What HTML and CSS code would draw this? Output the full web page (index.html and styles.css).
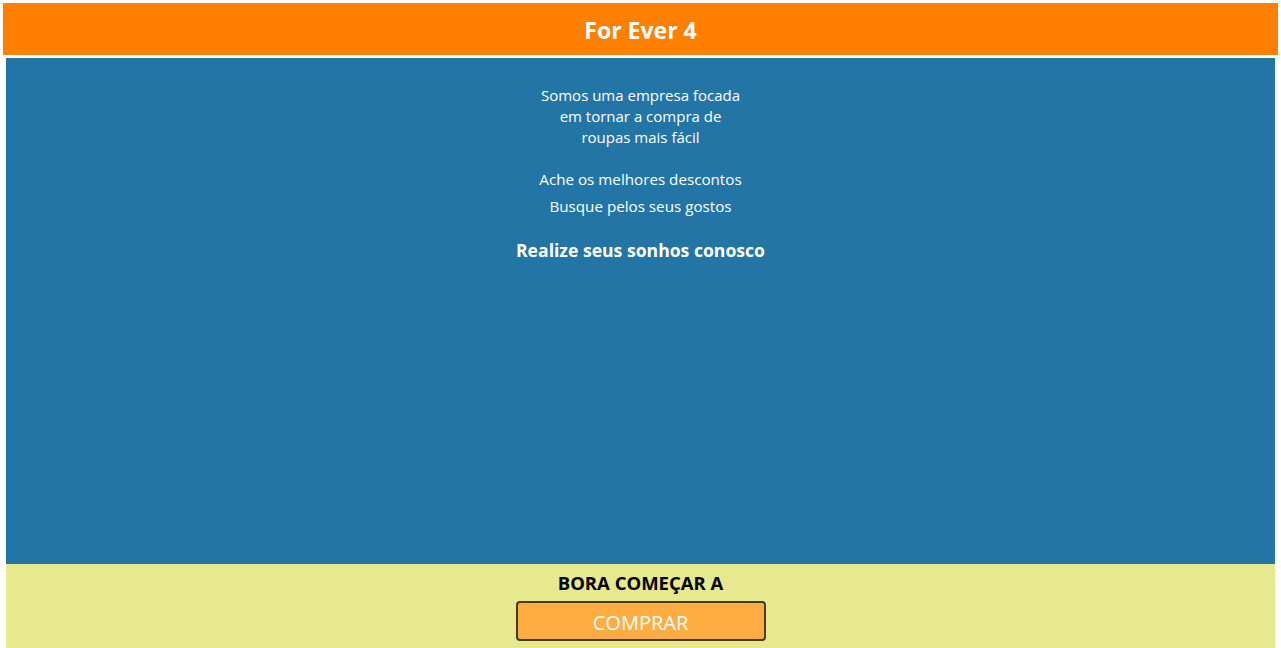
FILE: index.html
```html
<!DOCTYPE html>
<html lang="pt-BR">
<head>
<meta charset="utf-8">
<title>For Ever 4</title>
<link rel="stylesheet" href="styles.css">
</head>
<body>
<header class="topbar">
  <h1 class="brand">For Ever 4</h1>
</header>
<main class="hero">
  <p class="intro">Somos uma empresa focada em tornar a compra de roupas mais fácil</p>
  <p class="line first">Ache os melhores descontos</p>
  <p class="line">Busque pelos seus gostos</p>
  <h2 class="slogan">Realize seus sonhos conosco</h2>
</main>
<footer class="cta">
  <h3 class="cta-title">BORA COMEÇAR A</h3>
  <button class="cta-button" type="button">COMPRAR</button>
</footer>
</body>
</html>
```
FILE: styles.css
```css
html, body {
  margin: 0;
  background: #ffffff;
}
body {
  padding: 3px;
  font-family: "Open Sans", "Noto Sans", sans-serif;
}
.topbar {
  background: #ff8000;
  height: 52px;
  display: flex;
  align-items: center;
  justify-content: center;
}
.brand {
  margin: 0;
  color: #ffffff;
  font-size: 23px;
  font-weight: 700;
  line-height: 30px;
  padding-top: 2px;
}
.hero {
  margin: 3px 3px 0;
  background: #2375a6;
  height: 506px;
  box-sizing: border-box;
  padding-top: 27px;
  display: flex;
  flex-direction: column;
  align-items: center;
  color: #ffffff;
  text-align: center;
}
.intro {
  margin: 0;
  width: 205px;
  font-size: 15px;
  line-height: 21px;
}
.line {
  margin: 0;
  font-size: 15.2px;
  line-height: 27px;
}
.line.first {
  margin-top: 18px;
}
.slogan {
  margin: 18px 0 0;
  font-size: 17.6px;
  font-weight: 700;
  line-height: 24px;
}
.cta {
  margin: 0 3px;
  background: #e6e98e;
  padding: 7px 0 10px;
  display: flex;
  flex-direction: column;
  align-items: center;
}
.cta-title {
  margin: 0 0 6px;
  font-size: 18.5px;
  font-weight: 700;
  line-height: 24px;
  color: #000000;
}
.cta-button {
  width: 250px;
  height: 40px;
  background: #ffad41;
  border: 2px solid #4a3a22;
  border-radius: 4px;
  color: #ffffff;
  font-family: "Open Sans", "Noto Sans", sans-serif;
  font-size: 20px;
  padding: 2px 0 0;
}
```
